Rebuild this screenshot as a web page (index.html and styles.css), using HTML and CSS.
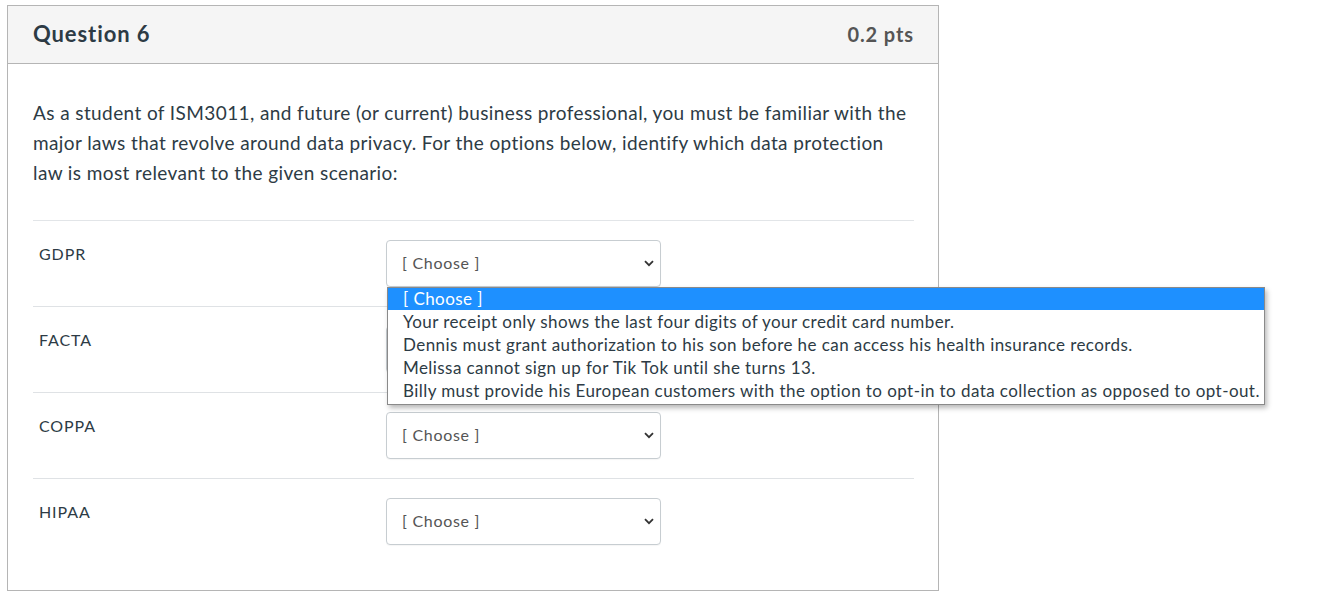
FILE: index.html
```html
<!DOCTYPE html>
<html>
<head>
<meta charset="utf-8">
<link rel="stylesheet" href="styles.css">
</head>
<body>
<div class="card">
  <div class="card-header">
    <span class="title">Question 6</span>
    <span class="pts">0.2 pts</span>
  </div>
  <div class="card-body">
    <p class="prompt">As a student of ISM3011, and future (or current) business professional, you must be familiar with the major laws that revolve around data privacy. For the options below, identify which data protection law is most relevant to the given scenario:</p>
    <div class="rows">
      <div class="row">
        <div class="label">GDPR</div>
        <div class="select-wrap">
          <div class="select"><span>[ Choose ]</span><svg class="chev" width="10" height="7" viewBox="0 0 10 7"><path d="M1 1.2 L5 5.2 L9 1.2" fill="none" stroke="#333" stroke-width="1.8"/></svg></div>
          <div class="menu">
            <div class="opt active">[ Choose ]</div>
            <div class="opt">Your receipt only shows the last four digits of your credit card number.</div>
            <div class="opt">Dennis must grant authorization to his son before he can access his health insurance records.</div>
            <div class="opt">Melissa cannot sign up for Tik Tok until she turns 13.</div>
            <div class="opt">Billy must provide his European customers with the option to opt-in to data collection as opposed to opt-out.</div>
          </div>
        </div>
      </div>
      <div class="row">
        <div class="label">FACTA</div>
        <div class="select-wrap">
          <div class="select covered"><span>[ Choose ]</span><svg class="chev" width="10" height="7" viewBox="0 0 10 7"><path d="M1 1.2 L5 5.2 L9 1.2" fill="none" stroke="#333" stroke-width="1.8"/></svg></div>
        </div>
      </div>
      <div class="row">
        <div class="label">COPPA</div>
        <div class="select-wrap">
          <div class="select"><span>[ Choose ]</span><svg class="chev" width="10" height="7" viewBox="0 0 10 7"><path d="M1 1.2 L5 5.2 L9 1.2" fill="none" stroke="#333" stroke-width="1.8"/></svg></div>
        </div>
      </div>
      <div class="row last">
        <div class="label">HIPAA</div>
        <div class="select-wrap">
          <div class="select"><span>[ Choose ]</span><svg class="chev" width="10" height="7" viewBox="0 0 10 7"><path d="M1 1.2 L5 5.2 L9 1.2" fill="none" stroke="#333" stroke-width="1.8"/></svg></div>
        </div>
      </div>
    </div>
  </div>
</div>
</body>
</html>
```
FILE: styles.css
```css
* { box-sizing: border-box; }
body {
  margin: 0;
  padding: 5px 0 0 7px;
  background: #fff;
  font-family: Lato, "Open Sans", sans-serif;
  color: #2d3b45;
}
.card {
  width: 932px;
  height: 586px;
  border: 1px solid #b5b5b5;
}
.card-header {
  height: 58px;
  background: #f5f5f5;
  border-bottom: 1px solid #b5b5b5;
  display: flex;
  align-items: center;
  justify-content: space-between;
  padding: 0 24px 2px 25px;
}
.title {
  font-size: 22px;
  font-weight: 700;
  letter-spacing: 0.9px;
  color: #2d3b45;
}
.pts {
  font-size: 20px;
  font-weight: 700;
  letter-spacing: 0.9px;
  color: #555;
}
.card-body {
  padding: 0 24px 0 25px;
}
.prompt {
  margin: 34px 0 0 0;
  font-size: 19px;
  line-height: 30px;
  letter-spacing: 0.4px;
  color: #2d3b45;
}
.rows {
  margin-top: 32px;
  border-top: 1px solid #e2e5e8;
}
.row {
  height: 86px;
  border-bottom: 1px solid #dfe2e5;
  display: flex;
  padding-top: 19px;
}
.row.last { border-bottom: none; }
.label {
  width: 353px;
  padding-left: 6px;
  padding-top: 4px;
  font-size: 16px;
  letter-spacing: 0.9px;
  color: #2d3b45;
}
.select-wrap {
  position: relative;
}
.select {
  width: 275px;
  height: 47px;
  border: 1px solid #c7cdd1;
  border-radius: 4px;
  background: #fff;
  display: flex;
  align-items: center;
  justify-content: space-between;
  padding: 0 6px 2px 15px;
  font-size: 16px;
  letter-spacing: 0.7px;
  color: #555;
  box-shadow: 0 1px 1px rgba(0,0,0,0.04);
}
.select.covered span { visibility: hidden; }
.chev { margin-top: 2px; }
.menu {
  position: absolute;
  left: 1px;
  top: 47px;
  width: 878px;
  background: #fff;
  border: 1px solid #8a8a8a;
  box-shadow: 2px 3px 5px rgba(0,0,0,0.28);
  padding: 0 0 2px 0;
  z-index: 5;
}
.opt {
  font-size: 17px;
  line-height: 23px;
  height: 23px;
  padding-left: 15px;
  letter-spacing: 0.43px;
  color: #2d3b45;
  white-space: nowrap;
}
.opt.active {
  background: #1e90ff;
  color: #fff;
  height: 22px;
  line-height: 21px;
}
```
